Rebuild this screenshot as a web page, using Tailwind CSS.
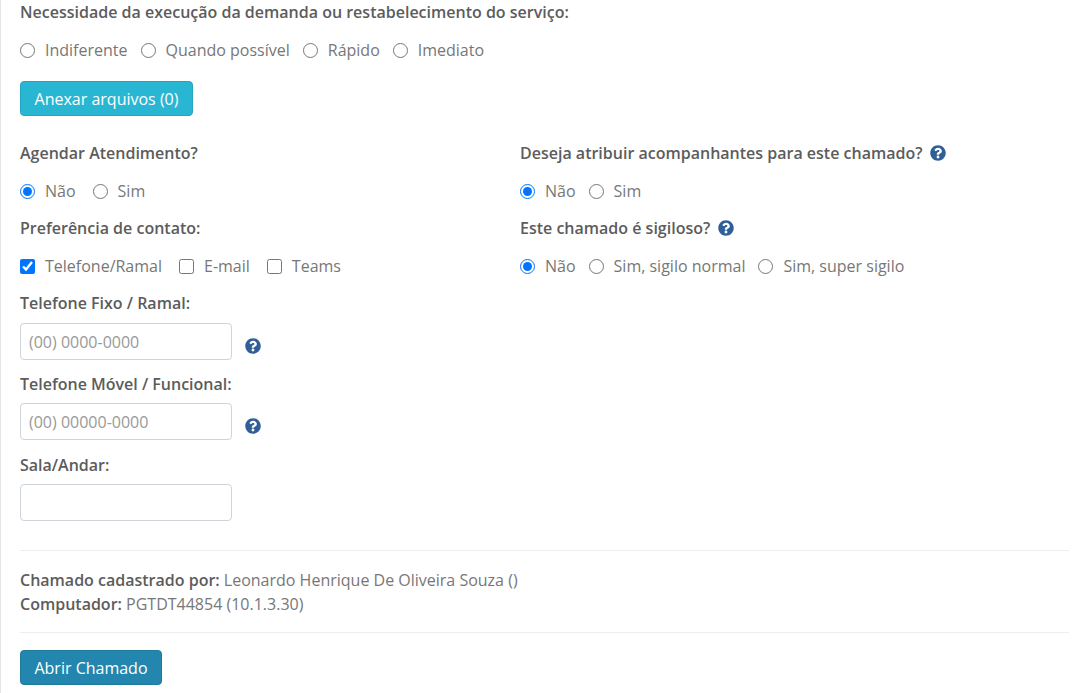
<!DOCTYPE html>
<html lang="pt-BR">
<head>
<meta charset="utf-8">
<title>Abrir Chamado</title>
<script src="https://cdn.jsdelivr.net/npm/@tailwindcss/browser@4"></script>
</head>
<body class="bg-white overflow-hidden font-['Open_Sans',sans-serif] text-[16px] leading-6 text-[#777777]">
<div class="h-[693px] w-[1081px] border-l border-l-[#e5e5e5] pl-[19px] pr-3">
  <p class="h-6 font-semibold text-[#5c5c5c]">Necessidade da execução da demanda ou restabelecimento do serviço:</p>
  <div class="mt-[14px] flex h-6 items-center gap-[13px]">
    <label class="flex items-center gap-[10px]"><input type="radio" name="a" class="h-[15px] w-[15px]">Indiferente</label>
    <label class="flex items-center gap-[10px]"><input type="radio" name="a" class="h-[15px] w-[15px]">Quando possível</label>
    <label class="flex items-center gap-[10px]"><input type="radio" name="a" class="h-[15px] w-[15px]">Rápido</label>
    <label class="flex items-center gap-[10px]"><input type="radio" name="a" class="h-[15px] w-[15px]">Imediato</label>
  </div>
  <button class="mt-[19px] block h-[35px] w-[173px] rounded border border-[#25a5c2] bg-[#29b6d3] text-white">Anexar arquivos (0)</button>

  <div class="mt-[25px] grid grid-cols-[500px_1fr]">
    <div>
      <p class="h-6 font-semibold text-[#5c5c5c]">Agendar Atendimento?</p>
      <div class="mt-[14px] flex h-6 items-center gap-[17px]">
        <label class="flex items-center gap-[10px]"><input type="radio" name="b" checked class="h-[15px] w-[15px]">Não</label>
        <label class="flex items-center gap-[10px]"><input type="radio" name="b" class="h-[15px] w-[15px]">Sim</label>
      </div>
      <p class="mt-[13px] h-6 font-semibold text-[#5c5c5c]">Preferência de contato:</p>
      <div class="mt-[14px] flex h-6 items-center gap-[17px]">
        <label class="flex items-center gap-[10px]"><input type="checkbox" checked class="h-[15px] w-[15px]">Telefone/Ramal</label>
        <label class="flex items-center gap-[10px]"><input type="checkbox" class="h-[15px] w-[15px]">E-mail</label>
        <label class="flex items-center gap-[10px]"><input type="checkbox" class="h-[15px] w-[15px]">Teams</label>
      </div>
      <p class="mt-[13px] h-6 font-semibold text-[#5c5c5c]">Telefone Fixo / Ramal:</p>
      <div class="mt-2 flex h-[37px] items-center">
        <input type="text" placeholder="(00) 0000-0000" class="h-[37px] w-[212px] rounded border border-[#ced4da] px-2 text-[#777777] placeholder:text-[#999999]">
        <svg viewBox="0 0 512 512" class="ml-[13px] mt-2 h-4 w-4 fill-[#2f5f96]"><path d="M504 256c0 136.997-111.043 248-248 248S8 392.997 8 256C8 119.083 119.043 8 256 8s248 111.083 248 248zM262.655 90c-54.497 0-89.255 22.957-116.549 63.758-3.536 5.286-2.353 12.415 2.715 16.258l34.699 26.31c5.205 3.947 12.621 3.008 16.665-2.122 17.864-22.658 30.113-35.797 57.303-35.797 20.429 0 45.698 13.148 45.698 32.958 0 14.976-12.363 22.667-32.534 33.976C247.128 238.528 216 254.941 216 296v4c0 6.627 5.373 12 12 12h56c6.627 0 12-5.373 12-12v-1.333c0-28.462 83.186-29.647 83.186-106.667 0-58.002-60.165-102-116.531-102zM256 338c-25.365 0-46 20.635-46 46 0 25.364 20.635 46 46 46s46-20.636 46-46c0-25.365-20.635-46-46-46z"/></svg>
      </div>
      <p class="mt-3 h-6 font-semibold text-[#5c5c5c]">Telefone Móvel / Funcional:</p>
      <div class="mt-[7px] flex h-[37px] items-center">
        <input type="text" placeholder="(00) 00000-0000" class="h-[37px] w-[212px] rounded border border-[#ced4da] px-2 text-[#777777] placeholder:text-[#999999]">
        <svg viewBox="0 0 512 512" class="ml-[13px] mt-2 h-4 w-4 fill-[#2f5f96]"><path d="M504 256c0 136.997-111.043 248-248 248S8 392.997 8 256C8 119.083 119.043 8 256 8s248 111.083 248 248zM262.655 90c-54.497 0-89.255 22.957-116.549 63.758-3.536 5.286-2.353 12.415 2.715 16.258l34.699 26.31c5.205 3.947 12.621 3.008 16.665-2.122 17.864-22.658 30.113-35.797 57.303-35.797 20.429 0 45.698 13.148 45.698 32.958 0 14.976-12.363 22.667-32.534 33.976C247.128 238.528 216 254.941 216 296v4c0 6.627 5.373 12 12 12h56c6.627 0 12-5.373 12-12v-1.333c0-28.462 83.186-29.647 83.186-106.667 0-58.002-60.165-102-116.531-102zM256 338c-25.365 0-46 20.635-46 46 0 25.364 20.635 46 46 46s46-20.636 46-46c0-25.365-20.635-46-46-46z"/></svg>
      </div>
      <p class="mt-[13px] h-6 font-semibold text-[#5c5c5c]">Sala/Andar:</p>
      <input type="text" class="mt-[7px] block h-[37px] w-[212px] rounded border border-[#ced4da] px-2">
    </div>
    <div>
      <p class="flex h-6 items-center gap-2 font-semibold text-[#5c5c5c]">Deseja atribuir acompanhantes para este chamado?
        <svg viewBox="0 0 512 512" class="h-4 w-4 fill-[#2f5f96]"><path d="M504 256c0 136.997-111.043 248-248 248S8 392.997 8 256C8 119.083 119.043 8 256 8s248 111.083 248 248zM262.655 90c-54.497 0-89.255 22.957-116.549 63.758-3.536 5.286-2.353 12.415 2.715 16.258l34.699 26.31c5.205 3.947 12.621 3.008 16.665-2.122 17.864-22.658 30.113-35.797 57.303-35.797 20.429 0 45.698 13.148 45.698 32.958 0 14.976-12.363 22.667-32.534 33.976C247.128 238.528 216 254.941 216 296v4c0 6.627 5.373 12 12 12h56c6.627 0 12-5.373 12-12v-1.333c0-28.462 83.186-29.647 83.186-106.667 0-58.002-60.165-102-116.531-102zM256 338c-25.365 0-46 20.635-46 46 0 25.364 20.635 46 46 46s46-20.636 46-46c0-25.365-20.635-46-46-46z"/></svg>
      </p>
      <div class="mt-[14px] flex h-6 items-center gap-[13px]">
        <label class="flex items-center gap-[10px]"><input type="radio" name="c" checked class="h-[15px] w-[15px]">Não</label>
        <label class="flex items-center gap-[10px]"><input type="radio" name="c" class="h-[15px] w-[15px]">Sim</label>
      </div>
      <p class="mt-[13px] flex h-6 items-center gap-2 font-semibold text-[#5c5c5c]">Este chamado é sigiloso?
        <svg viewBox="0 0 512 512" class="h-4 w-4 fill-[#2f5f96]"><path d="M504 256c0 136.997-111.043 248-248 248S8 392.997 8 256C8 119.083 119.043 8 256 8s248 111.083 248 248zM262.655 90c-54.497 0-89.255 22.957-116.549 63.758-3.536 5.286-2.353 12.415 2.715 16.258l34.699 26.31c5.205 3.947 12.621 3.008 16.665-2.122 17.864-22.658 30.113-35.797 57.303-35.797 20.429 0 45.698 13.148 45.698 32.958 0 14.976-12.363 22.667-32.534 33.976C247.128 238.528 216 254.941 216 296v4c0 6.627 5.373 12 12 12h56c6.627 0 12-5.373 12-12v-1.333c0-28.462 83.186-29.647 83.186-106.667 0-58.002-60.165-102-116.531-102zM256 338c-25.365 0-46 20.635-46 46 0 25.364 20.635 46 46 46s46-20.636 46-46c0-25.365-20.635-46-46-46z"/></svg>
      </p>
      <div class="mt-[14px] flex h-6 items-center gap-[13px]">
        <label class="flex items-center gap-[10px]"><input type="radio" name="d" checked class="h-[15px] w-[15px]">Não</label>
        <label class="flex items-center gap-[10px]"><input type="radio" name="d" class="h-[15px] w-[15px]">Sim, sigilo normal</label>
        <label class="flex items-center gap-[10px]"><input type="radio" name="d" class="h-[15px] w-[15px]">Sim, super sigilo</label>
      </div>
    </div>
  </div>

  <hr class="mt-[29px] border-t border-[#eeeeee]">
  <p class="mt-[17px] h-6"><span class="font-semibold text-[#5c5c5c]">Chamado cadastrado por:</span> Leonardo Henrique De Oliveira Souza ()</p>
  <p class="h-6"><span class="font-semibold text-[#5c5c5c]">Computador:</span> PGTDT44854 (10.1.3.30)</p>
  <hr class="mt-4 border-t border-[#eeeeee]">
  <button class="mt-[17px] block h-[35px] w-[142px] rounded border border-[#1f7a9c] bg-[#2286ae] text-white">Abrir Chamado</button>
</div>
</body>
</html>
